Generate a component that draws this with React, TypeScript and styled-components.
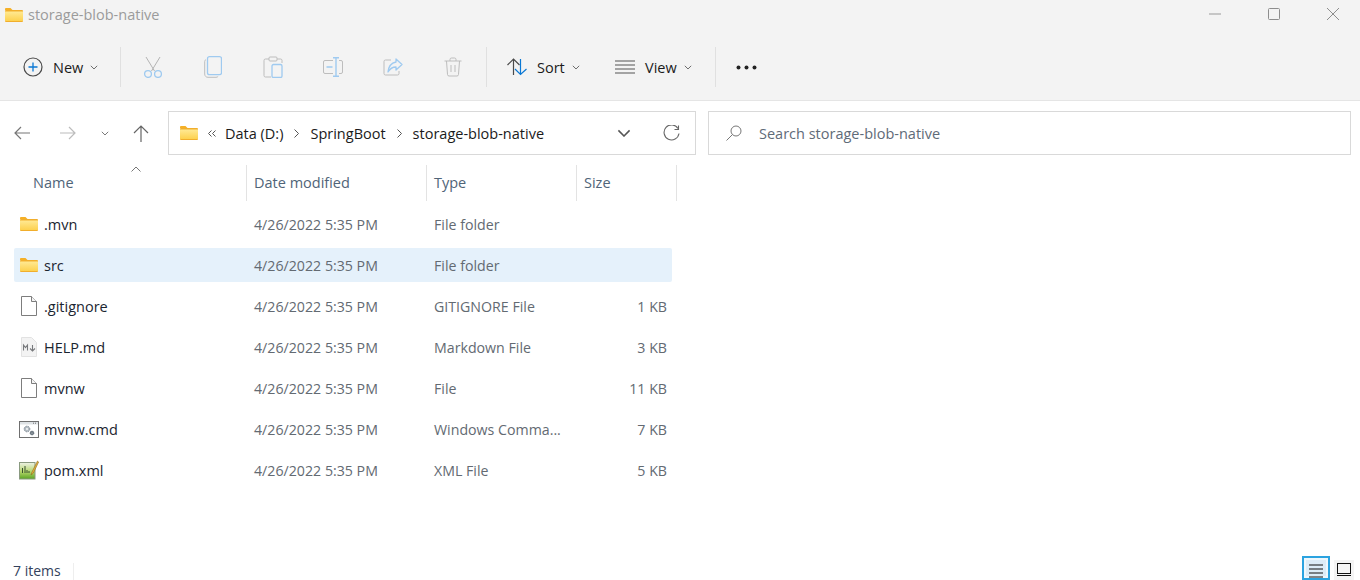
import styled, { createGlobalStyle } from "styled-components";

const GlobalStyle = createGlobalStyle`
  html, body {
    margin: 0;
    padding: 0;
    background: #fff;
  }
  svg {
    flex: none;
  }
`;

const Window = styled.div`
  display: flex;
  flex-direction: column;
  width: 1360px;
  height: 580px;
  overflow: hidden;
  font-family: "Open Sans", "Noto Sans", sans-serif;
  font-size: 14.5px;
  color: #1b1b1b;
  background: #fff;
`;

const TitleBar = styled.div`
  display: flex;
  align-items: center;
  height: 34px;
  padding: 0 0 5px 5px;
  box-sizing: border-box;
  background: #f3f3f3;
`;

const TitleText = styled.span`
  margin-left: 5px;
  color: #9b9b9b;
  flex: 1;
`;

const WindowControls = styled.div`
  display: flex;
  align-items: center;
  gap: 47px;
  padding: 0 21px 1px 0;
`;

const Toolbar = styled.div`
  display: flex;
  align-items: center;
  height: 67px;
  padding-left: 23px;
  box-sizing: border-box;
  background: #f3f3f3;
  border-bottom: 1px solid #e5e5e5;
`;

const ToolLabelButton = styled.div<{ $width: number }>`
  display: flex;
  align-items: center;
  width: ${(p) => p.$width}px;
  flex: none;
  gap: 10px;
  color: #1b1b1b;
`;

const Caret = styled.span`
  display: flex;
  margin-left: -3px;
`;

const Separator = styled.div<{ $left: number; $right: number }>`
  width: 1px;
  height: 40px;
  flex: none;
  margin: 0 ${(p) => p.$right}px 0 ${(p) => p.$left}px;
  background: #e0e0e0;
`;

const ToolIcon = styled.div`
  display: flex;
  justify-content: center;
  width: 60px;
  flex: none;
`;

const NavBar = styled.div`
  display: flex;
  align-items: center;
  height: 64px;
  padding: 0 9px 0 0;
  box-sizing: border-box;
`;

const NavButtons = styled.div`
  display: grid;
  grid-template-columns: 44px 48px 26px 46px;
  align-items: center;
  justify-items: center;
  width: 168px;
  flex: none;
`;

const SmallCaret = styled.span`
  display: flex;
`;

const AddressBox = styled.div`
  display: flex;
  align-items: center;
  width: 528px;
  height: 44px;
  flex: none;
  padding-left: 11px;
  box-sizing: border-box;
  border: 1px solid #d9d9d9;
`;

const Crumb = styled.span`
  white-space: nowrap;
`;

const CrumbSep = styled.span`
  display: flex;
  justify-content: center;
  width: 27px;
  flex: none;
`;

const AddressEnd = styled.div`
  display: flex;
  align-items: center;
  gap: 32px;
  margin-left: auto;
  padding-right: 15px;
`;

const SearchBox = styled.div`
  display: flex;
  align-items: center;
  flex: 1;
  height: 44px;
  margin-left: 12px;
  padding-left: 17px;
  gap: 17px;
  box-sizing: border-box;
  border: 1px solid #d9d9d9;
  color: #5f6b78;
`;

const ListArea = styled.div`
  position: relative;
  display: flex;
  flex-direction: column;
  flex: 1;
  min-height: 0;
  padding-left: 14px;
`;

const SortCaret = styled.span`
  position: absolute;
  left: 131px;
  top: 1px;
  display: flex;
`;

const HeaderRow = styled.div`
  display: grid;
  grid-template-columns: 233px 180px 150px 100px;
  width: 663px;
  height: 36px;
  margin-bottom: 6px;
`;

const HeaderCell = styled.div<{ $first?: boolean }>`
  display: flex;
  align-items: center;
  padding: 0 0 2px ${(p) => (p.$first ? 19 : 7)}px;
  color: #506478;
  border-right: 1px solid #e3e3e3;
  box-sizing: border-box;
`;

const Rows = styled.div`
  display: flex;
  flex-direction: column;
  gap: 7px;
`;

const Row = styled.div<{ $selected?: boolean }>`
  display: grid;
  grid-template-columns: 232px 180px 150px 96px;
  align-items: center;
  width: 658px;
  height: 34px;
  border-radius: 2px;
  background: ${(p) => (p.$selected ? "#e5f1fb" : "transparent")};
`;

const NameCell = styled.div`
  display: flex;
  align-items: center;
  color: #1b2530;
`;

const IconSlot = styled.span`
  display: flex;
  justify-content: center;
  width: 30px;
  flex: none;
`;

const MetaCell = styled.div`
  padding-left: 8px;
  font-size: 14.2px;
  color: #636a72;
  white-space: nowrap;
`;

const SizeCell = styled.div`
  padding-right: 5px;
  font-size: 14.2px;
  text-align: right;
  color: #636a72;
`;

const StatusBar = styled.div`
  display: flex;
  align-items: flex-end;
  height: 24px;
  padding-left: 13px;
  flex: none;
`;

const ItemCount = styled.span`
  height: 17px;
  line-height: 15px;
  font-size: 14px;
  padding-right: 12px;
  border-right: 1px solid #eee;
  color: #33415c;
`;

const ViewButtons = styled.div`
  display: flex;
  align-items: flex-end;
  gap: 4px;
  height: 24px;
  margin-left: auto;
  padding-right: 6px;
`;

const ListViewButton = styled.div`
  display: flex;
  justify-content: center;
  box-sizing: border-box;
  width: 28px;
  height: 24px;
  padding-top: 6px;
  background: #dcecf7;
  border: 2px solid #2ba3e0;
  box-shadow: inset 0 0 0 2px #eef7fc;
`;

const TileViewButton = styled.div`
  display: flex;
  justify-content: center;
  box-sizing: border-box;
  width: 20px;
  height: 20px;
  padding-top: 3px;
  background: #f4f4f4;
`;

const Chevron = ({ size = 8, color = "#5a5a5a" }: { size?: number; color?: string }) => (
  <svg width={size} height={size * 0.6} viewBox="0 0 10 6" fill="none">
    <path d="M1 1l4 4 4-4" stroke={color} strokeWidth="1.1" />
  </svg>
);

const FolderIcon = ({ id }: { id: string }) => (
  <svg width="18" height="14" viewBox="0 0 18 14">
    <defs>
      <linearGradient id={id} x1="0" y1="0" x2="0" y2="1">
        <stop offset="0" stopColor="#ffe993" />
        <stop offset="1" stopColor="#fdd14f" />
      </linearGradient>
    </defs>
    <path d="M0 1.2C0 .5.5 0 1.2 0h4.3l2 2H0z" fill="#f5b027" />
    <rect x="0" y="2" width="18" height="12" rx="1" fill="#f1ae2c" />
    <path d="M0 3.5h18V12.5a.5.5 0 0 1-.5.5H.5a.5.5 0 0 1-.5-.5z" fill={`url(#${id})`} />
  </svg>
);

const BlankFile = () => (
  <svg width="16" height="20" viewBox="0 0 16 20" fill="none">
    <path d="M.5.5h10l5 5v14H.5z" fill="#fff" stroke="#7d7d7d" />
    <path d="M10.5.5v5h5" stroke="#7d7d7d" fill="#f4f4f4" />
  </svg>
);

const MarkdownFile = () => (
  <svg width="16" height="20" viewBox="0 0 16 20">
    <path d="M.5.5h10l5 5v14H.5z" fill="#f3f3f3" stroke="#e2e2e2" />
    <path d="M2.5 13.5V8l2 2.500 2-2.500v5.500M11.500 8v5.500M9 11.500l2.500 2.500 2.500-2.500" stroke="#77797c" fill="none" strokeWidth="1.100" />
  </svg>
);

const CmdFile = () => (
  <svg width="20" height="17" viewBox="0 0 20 17" fill="none">
    <rect x=".5" y=".5" width="19" height="16" fill="#fff" stroke="#6f6f6f" />
    <rect x="1" y="1" width="18" height="2.500" fill="#dfe3e6" />
    <path d="M14 2.200h1M16 2.200h1" stroke="#6f6f6f" />
    <circle cx="8" cy="8" r="2.800" fill="#b4bcc3" stroke="#7b8791" strokeDasharray="1.300 .7" />
    <circle cx="8" cy="8" r=".9" fill="#fff" />
    <circle cx="13" cy="12" r="2" fill="#5f6b75" stroke="#5f6b75" strokeDasharray="1 .6" strokeWidth=".6" />
    <circle cx="13" cy="12" r=".6" fill="#fff" />
  </svg>
);

const XmlFile = () => (
  <svg width="20" height="20" viewBox="0 0 20 20" fill="none">
    <defs>
      <linearGradient id="xmlGreen" x1="0" y1="0" x2="0" y2="1">
        <stop offset="0" stopColor="#eef2e6" />
        <stop offset=".55" stopColor="#b5d66c" />
        <stop offset="1" stopColor="#5aa322" />
      </linearGradient>
    </defs>
    <rect x=".5" y="2.500" width="15.500" height="16.500" fill="url(#xmlGreen)" stroke="#8a9a80" />
    <path d="M3.500 13V8M6 13V6M8 13v-3M10 13v-2" stroke="#39512f" strokeWidth="1" />
    <path d="M18.500 1L13 12l-1 3 2.400-2L19.600 2z" fill="#e7b23c" stroke="#8d6b1e" strokeWidth=".6" />
  </svg>
);

const CrumbArrow = () => (
  <CrumbSep>
    <svg width="5" height="9" viewBox="0 0 5 9" fill="none">
      <path d="M.5.500l4 4-4 4" stroke="#555" />
    </svg>
  </CrumbSep>
);

const rows = [
  { name: ".mvn", type: "File folder", size: "", icon: <FolderIcon id="f1" /> },
  { name: "src", type: "File folder", size: "", icon: <FolderIcon id="f2" />, selected: true },
  { name: ".gitignore", type: "GITIGNORE File", size: "1 KB", icon: <BlankFile /> },
  { name: "HELP.md", type: "Markdown File", size: "3 KB", icon: <MarkdownFile /> },
  { name: "mvnw", type: "File", size: "11 KB", icon: <BlankFile /> },
  { name: "mvnw.cmd", type: "Windows Comma...", size: "7 KB", icon: <CmdFile /> },
  { name: "pom.xml", type: "XML File", size: "5 KB", icon: <XmlFile /> },
];

const App = () => {
  return (
    <Window>
      <GlobalStyle />
      <TitleBar>
        <FolderIcon id="titleFolder" />
        <TitleText>storage-blob-native</TitleText>
        <WindowControls>
          <svg width="12" height="12" viewBox="0 0 12 12">
            <path d="M0 6h12" stroke="#999" />
          </svg>
          <svg width="12" height="12" viewBox="0 0 12 12" fill="none">
            <rect x=".5" y=".5" width="11" height="11" rx="1" stroke="#8d8d8d" />
          </svg>
          <svg width="12" height="12" viewBox="0 0 12 12">
            <path d="M0 0l12 12M12 0L0 12" stroke="#8d8d8d" />
          </svg>
        </WindowControls>
      </TitleBar>

      <Toolbar>
        <ToolLabelButton $width={74}>
          <svg width="20" height="20" viewBox="0 0 20 20" fill="none">
            <circle cx="10" cy="10" r="9" stroke="#4a4a4a" strokeWidth="1.2" />
            <path d="M10 5.500v9M5.500 10h9" stroke="#0a78d4" strokeWidth="1.300" />
          </svg>
          <span>New</span>
          <Caret>
            <Chevron />
          </Caret>
        </ToolLabelButton>
        <Separator $left={23} $right={2} />
        <ToolIcon>
          <svg width="20" height="22" viewBox="0 0 20 22" fill="none">
            <path d="M3 1l8.500 14M17 1L8.500 15" stroke="#b4b4b4" />
            <circle cx="5" cy="18" r="3.400" stroke="#9fcaf0" strokeWidth="1.300" />
            <circle cx="15" cy="18" r="3.400" stroke="#9fcaf0" strokeWidth="1.300" />
          </svg>
        </ToolIcon>
        <ToolIcon>
          <svg width="18" height="22" viewBox="0 0 18 22" fill="none">
            <path d="M2 3.500C1 4 .7 5 .7 6v12c0 2 1.300 3.300 3.300 3.300h8c1 0 1.700-.4 2.200-1" stroke="#bdbdbd" />
            <rect x="3.500" y=".7" width="14" height="18" rx="2" stroke="#9fcaf0" strokeWidth="1.300" />
          </svg>
        </ToolIcon>
        <ToolIcon>
          <svg width="20" height="22" viewBox="0 0 20 22" fill="none">
            <path d="M6 3H2.500A1.500 1.500 0 0 0 1 4.500v15A1.500 1.500 0 0 0 2.500 21H8M14 3h3.500A1.500 1.500 0 0 1 19 4.500V7" stroke="#bdbdbd" />
            <rect x="6" y="1" width="8" height="4" rx="1" stroke="#bdbdbd" />
            <rect x="9" y="8.500" width="10" height="13" rx="1.500" stroke="#9fcaf0" strokeWidth="1.300" />
          </svg>
        </ToolIcon>
        <ToolIcon>
          <svg width="20" height="20" viewBox="0 0 20 20" fill="none">
            <path d="M10 3.500H2A1.500 1.500 0 0 0 .5 5v10A1.500 1.500 0 0 0 2 16.500h8M16 3.500h2A1.500 1.500 0 0 1 19.500 5v10a1.500 1.500 0 0 1-1.500 1.500h-2" stroke="#bdbdbd" />
            <path d="M10 .7h6M10 19.300h6M13 .7v18.600M3.500 10h6" stroke="#9fcaf0" strokeWidth="1.400" />
          </svg>
        </ToolIcon>
        <ToolIcon>
          <svg width="20" height="20" viewBox="0 0 20 20" fill="none">
            <path d="M8 3H2.500A1.500 1.500 0 0 0 1 4.500v12A1.500 1.500 0 0 0 2.500 18h12a1.500 1.500 0 0 0 1.500-1.500V14" stroke="#bdbdbd" />
            <path d="M13 2l6 5.500-6 5.500V10c-4 0-6 1.500-8 5 .5-5 3-9 8-10z" stroke="#9fcaf0" strokeWidth="1.300" strokeLinejoin="round" />
          </svg>
        </ToolIcon>
        <ToolIcon>
          <svg width="18" height="20" viewBox="0 0 18 20" fill="none">
            <path d="M.5 4h17M6 4V2.500A1.500 1.500 0 0 1 7.500 1h3A1.500 1.500 0 0 1 12 2.500V4M2.500 4l1 13.500A1.600 1.600 0 0 0 5 19h8a1.600 1.600 0 0 0 1.500-1.500l1-13.500M7 8v7M11 8v7" stroke="#bdbdbd" />
          </svg>
        </ToolIcon>
        <Separator $left={3} $right={20} />
        <ToolLabelButton $width={108}>
          <svg width="20" height="18" viewBox="0 0 20 18" fill="none">
            <path d="M6.500 17V1.500M.5 7l6-6 6 6" stroke="#4a4a4a" strokeWidth="1.200" />
            <path d="M13.500 1v15.500M8 11l5.500 5.500 6-5.500" stroke="#0a78d4" strokeWidth="1.200" />
          </svg>
          <span>Sort</span>
          <Caret>
            <Chevron />
          </Caret>
        </ToolLabelButton>
        <ToolLabelButton $width={100}>
          <svg width="20" height="14" viewBox="0 0 20 14">
            <path d="M0 1h20M0 5h20M0 9h20M0 13h20" stroke="#555" strokeWidth="1.100" />
          </svg>
          <span>View</span>
          <Caret>
            <Chevron />
          </Caret>
        </ToolLabelButton>
        <Separator $left={0} $right={20} />
        <svg width="21" height="5" viewBox="0 0 21 5" fill="#222">
          <circle cx="2.500" cy="2.500" r="2" />
          <circle cx="10.500" cy="2.500" r="2" />
          <circle cx="18.500" cy="2.500" r="2" />
        </svg>
      </Toolbar>

      <NavBar>
        <NavButtons>
          <svg width="16" height="14" viewBox="0 0 16 14" fill="none">
            <path d="M16 7H1M7 1L1 7l6 6" stroke="#777" strokeWidth="1.200" />
          </svg>
          <svg width="16" height="14" viewBox="0 0 16 14" fill="none">
            <path d="M0 7h15M9 1l6 6-6 6" stroke="#bcbcbc" strokeWidth="1.200" />
          </svg>
          <SmallCaret>
            <Chevron color="#666" />
          </SmallCaret>
          <svg width="16" height="17" viewBox="0 0 16 17" fill="none">
            <path d="M8 17V1.500M1 8l7-7 7 7" stroke="#666" strokeWidth="1.200" />
          </svg>
        </NavButtons>
        <AddressBox>
          <FolderIcon id="addrFolder" />
          <CrumbSep>
            <svg width="8" height="7" viewBox="0 0 8 7" fill="none">
              <path d="M3.500.5l-3 3 3 3M7.500.5l-3 3 3 3" stroke="#555" />
            </svg>
          </CrumbSep>
          <Crumb>Data (D:)</Crumb>
          <CrumbArrow />
          <Crumb>SpringBoot</Crumb>
          <CrumbArrow />
          <Crumb>storage-blob-native</Crumb>
          <AddressEnd>
            <Chevron size={14} color="#555" />
            <svg width="17" height="17" viewBox="0 0 17 17" fill="none">
              <path d="M15 3.500A7.500 7.500 0 1 0 16 8.500" stroke="#666" strokeWidth="1.100" />
              <path d="M15.500 .5v4h-4" stroke="#666" strokeWidth="1.100" />
            </svg>
          </AddressEnd>
        </AddressBox>
        <SearchBox>
          <svg width="16" height="16" viewBox="0 0 16 16" fill="none">
            <circle cx="10" cy="6" r="5" stroke="#777" />
            <path d="M6.500 9.500L.5 15.500" stroke="#777" />
          </svg>
          <span>Search storage-blob-native</span>
        </SearchBox>
      </NavBar>

      <ListArea>
        <SortCaret>
          <svg width="10" height="6" viewBox="0 0 10 6" fill="none">
            <path d="M.5 5.500L5 1l4.500 4.500" stroke="#777" />
          </svg>
        </SortCaret>
        <HeaderRow>
          <HeaderCell $first>Name</HeaderCell>
          <HeaderCell>Date modified</HeaderCell>
          <HeaderCell>Type</HeaderCell>
          <HeaderCell>Size</HeaderCell>
        </HeaderRow>
        <Rows>
          {rows.map((row) => (
            <Row key={row.name} $selected={row.selected}>
              <NameCell>
                <IconSlot>{row.icon}</IconSlot>
                {row.name}
              </NameCell>
              <MetaCell>4/26/2022 5:35 PM</MetaCell>
              <MetaCell>{row.type}</MetaCell>
              <SizeCell>{row.size}</SizeCell>
            </Row>
          ))}
        </Rows>
      </ListArea>

      <StatusBar>
        <ItemCount>7 items</ItemCount>
        <ViewButtons>
          <ListViewButton>
            <svg width="14" height="14" viewBox="0 0 14 14">
              <path d="M0 1h14M0 5h14M0 9h14M0 13h14" stroke="#111" />
            </svg>
          </ListViewButton>
          <TileViewButton>
            <svg width="14" height="14" viewBox="0 0 14 14" fill="none">
              <rect x=".5" y=".5" width="13" height="10" stroke="#111" />
              <path d="M0 12.500h14" stroke="#111" />
            </svg>
          </TileViewButton>
        </ViewButtons>
      </StatusBar>
    </Window>
  );
};

export default App;
